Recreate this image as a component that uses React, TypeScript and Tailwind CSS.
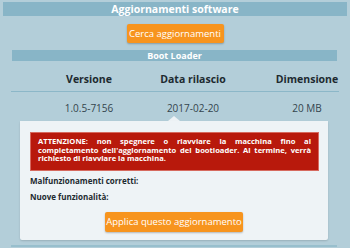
import React from "react";

const font = { fontFamily: '"Open Sans", "DejaVu Sans", sans-serif' };

function InfoRow({ label }: { label: string }) {
  return <div className="h-[10px] text-[8px] font-bold leading-[10px] text-[#1d2a30]">{label}</div>;
}

export default function App() {
  return (
    <div className="w-[350px] h-[248px] overflow-hidden bg-[#b3ced9] pt-[2px]" style={font}>
      {/* Title bar */}
      <div className="mx-[3px] h-[14px] bg-[#88b5c7] text-center text-[10.5px] font-bold leading-[14px] text-white">
        Aggiornamenti software
      </div>

      <div className="mt-[8px] flex justify-center">
        <button className="h-[19px] w-[97px] rounded-[2px] bg-[#f7941e] text-[9.5px] leading-[19px] text-white shadow-[0_1px_2px_rgba(0,0,0,0.25)]">
          Cerca aggiornamenti
        </button>
      </div>

      {/* Section bar */}
      <div className="ml-[12px] mr-[13px] mt-[7px] h-[11px] bg-[#88b5c7] text-center text-[9px] font-bold leading-[11px] text-white">
        Boot Loader
      </div>

      {/* Table */}
      <div className="mx-[11px]">
        <div className="flex h-[31px] items-center border-b border-[#8cb7c8] pt-[7px] text-[10.5px] font-bold text-[#1d2a30]">
          <div className="ml-[20px] flex w-[116px] justify-center whitespace-nowrap">Versione</div>
          <div className="flex w-[92px] justify-center whitespace-nowrap">Data rilascio</div>
          <div className="ml-[39px] flex w-[58px] justify-center whitespace-nowrap">Dimensione</div>
        </div>
        <div className="flex h-[24px] items-center pt-[9px] text-[10px] text-[#33454d]">
          <div className="ml-[20px] flex w-[116px] justify-center whitespace-nowrap">1.0.5-7156</div>
          <div className="flex w-[92px] justify-center whitespace-nowrap">2017-02-20</div>
          <div className="ml-[39px] flex w-[58px] justify-center whitespace-nowrap">20 MB</div>
        </div>
      </div>

      {/* Popover */}
      <div className="ml-[168px] h-0 w-0 border-x-[6px] border-b-[5px] border-x-transparent border-b-[#eef3f6]" />
      <div className="mx-[20px] h-[119px] w-[308px] rounded-b-[2px] bg-[#eef3f6] px-[10px] pt-[11px] shadow-[0_1px_2px_rgba(0,0,0,0.15)]">
        <div className="w-[289px] border border-[#d66a5f] bg-[#b8190c] px-[7px] pb-[7px] pt-[4px] text-[7.6px] font-bold leading-[8.7px] text-white">
          <div className="whitespace-nowrap text-justify [text-align-last:justify]">
            ATTENZIONE: non spegnere o riavviare la macchina fino al
          </div>
          <div className="whitespace-nowrap text-justify [text-align-last:justify]">
            completamento dell'aggiornamento del bootloader. Al termine, verrà
          </div>
          <div className="whitespace-nowrap">richiesto di riavviare la macchina.</div>
        </div>
        <div className="mt-[5px]">
          <InfoRow label="Malfunzionamenti corretti:" />
        </div>
        <div className="mt-[6px]">
          <InfoRow label="Nuove funzionalità:" />
        </div>
        <div className="mt-[10px] flex justify-center">
          <button className="h-[20px] w-[138px] rounded-[2px] bg-[#f7941e] text-[9.5px] leading-[20px] text-white shadow-[0_1px_2px_rgba(0,0,0,0.25)]">
            Applica questo aggiornamento
          </button>
        </div>
      </div>

      <div className="ml-[11px] mr-[13px] mt-[5px] h-[2px] bg-[#98bfcd]" />
    </div>
  );
}
